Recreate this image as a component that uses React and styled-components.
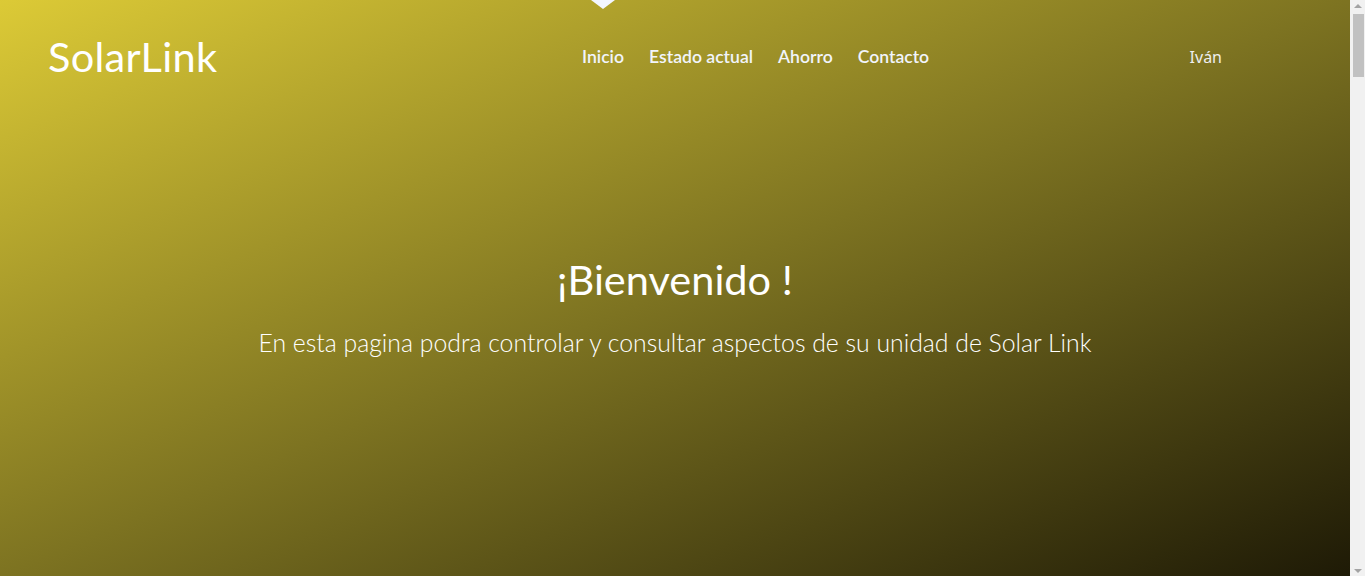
import React from "react";
import styled, { createGlobalStyle } from "styled-components";

const Global = createGlobalStyle`
  html, body { margin: 0; padding: 0; }
  body { font-family: "Lato", "Noto Sans", sans-serif; background: #1e1a06; }
  * { box-sizing: border-box; }
`;

const Page = styled.div`
  min-height: 5000px;
  margin-right: 15px;
  background: #1e1a06;
`;

const Hero = styled.section`
  height: 100vh;
  background: linear-gradient(to bottom right, #dcca36 0%, #7d7321 50%, #1e1a06 100%);
  display: flex;
  flex-direction: column;
  color: #fff;
`;

const Header = styled.header`
  height: 114px;
  display: grid;
  grid-template-columns: 534px auto 1fr;
  align-items: stretch;
  padding: 0 128px 0 48px;
`;

const Logo = styled.div`
  display: flex;
  align-items: center;
  font-family: "Lato", sans-serif;
  font-size: 41.5px;
  font-weight: 400;
  letter-spacing: 0.3px;
  color: #fff;
  padding-bottom: 2px;
`;

const Nav = styled.nav`
  display: flex;
  gap: 25px;
`;

const NavItem = styled.a`
  position: relative;
  display: flex;
  align-items: center;
  font-family: "Lato", sans-serif;
  font-size: 17.6px;
  font-weight: 600;
  color: #f1f4fb;
  text-decoration: none;
  padding-bottom: 1px;

  ${(p) =>
    p.$active &&
    `
    &::before {
      content: "";
      position: absolute;
      top: 0;
      left: 50%;
      transform: translateX(-50%);
      border-left: 12px solid transparent;
      border-right: 12px solid transparent;
      border-top: 9px solid #f3f6ff;
    }
  `}
`;

const User = styled.div`
  justify-self: end;
  display: flex;
  align-items: center;
  font-family: "Noto Sans", sans-serif;
  font-size: 16px;
  color: #eeeeee;
  padding-bottom: 1px;
`;

const Content = styled.div`
  text-align: center;
  padding-top: 141px;
`;

const Title = styled.h1`
  margin: 0;
  font-family: "Lato", sans-serif;
  font-weight: 400;
  font-size: 41.5px;
  line-height: 48px;
  color: #fff;
`;

const Subtitle = styled.p`
  margin: 24px 0 0;
  font-family: "Lato", sans-serif;
  font-weight: 300;
  font-size: 24.8px;
  line-height: 32px;
  color: #fff;
`;

const ScrollBar = styled.div`
  position: fixed;
  top: 0;
  right: 0;
  width: 15px;
  height: 100vh;
  background: #f1f1f1;
  display: flex;
  flex-direction: column;
  align-items: center;
`;

const Arrow = styled.div`
  width: 0;
  height: 0;
  border-left: 4px solid transparent;
  border-right: 4px solid transparent;
  ${(p) =>
    p.$down
      ? `border-top: 4px solid #a3a3a3; margin-top: auto; margin-bottom: 3px;`
      : `border-bottom: 4px solid #a3a3a3; margin-top: 4px;`}
`;

const Thumb = styled.div`
  width: 11px;
  height: 63px;
  margin-top: 6px;
  margin-left: 2px;
  background: #c1c1c1;
`;

export default function App() {
  return (
    <>
      <Global />
      <Page>
        <Hero>
          <Header>
            <Logo>SolarLink</Logo>
            <Nav>
              <NavItem href="#" $active>Inicio</NavItem>
              <NavItem href="#">Estado actual</NavItem>
              <NavItem href="#">Ahorro</NavItem>
              <NavItem href="#">Contacto</NavItem>
            </Nav>
            <User>Iván</User>
          </Header>
          <Content>
            <Title>¡Bienvenido !</Title>
            <Subtitle>En esta pagina podra controlar y consultar aspectos de su unidad de Solar Link</Subtitle>
          </Content>
        </Hero>
      </Page>
      <ScrollBar aria-hidden="true">
        <Arrow />
        <Thumb />
        <Arrow $down />
      </ScrollBar>
    </>
  );
}
